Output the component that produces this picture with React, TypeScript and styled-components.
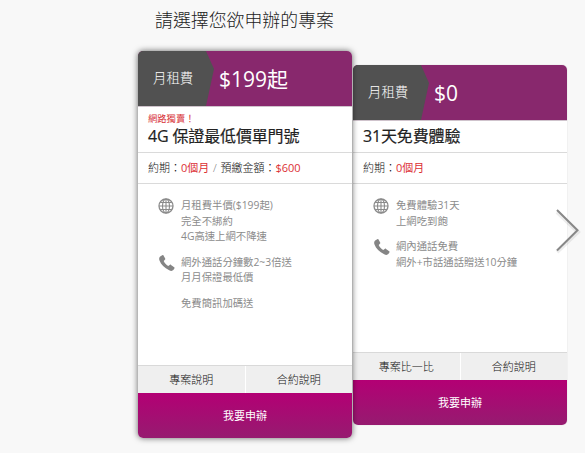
import React from "react";
import styled, { createGlobalStyle } from "styled-components";

const GlobalStyle = createGlobalStyle`
  body {
    margin: 0;
    background: #f8f8f8;
    font-family: "Open Sans", "Noto Sans CJK TC", sans-serif;
    overflow: hidden;
  }
  * { box-sizing: border-box; }
`;

const Page = styled.main`
  position: relative;
  width: 585px;
  height: 453px;
  overflow: hidden;
  background: #f8f8f8;
`;

const Heading = styled.h1`
  margin: 0;
  padding: 7px 0 0 155px;
  height: 51px;
  font-size: 17.9px;
  line-height: 26px;
  font-weight: 300;
  color: #222;
  white-space: nowrap;
`;

const Cards = styled.div`
  display: flex;
  align-items: flex-start;
  gap: 1px;
  padding-left: 138px;
`;

const Card = styled.article<{ $active?: boolean }>`
  position: relative;
  z-index: ${(p) => (p.$active ? 1 : 0)};
  display: flex;
  flex-direction: column;
  width: 214px;
  height: ${(p) => (p.$active ? 387 : 359.5)}px;
  margin-top: ${(p) => (p.$active ? 0 : 14)}px;
  border-radius: 5px;
  background: #fff;
  box-shadow: ${(p) => (p.$active ? "0 0 6px rgba(0, 0, 0, 0.6)" : "0 0 1px rgba(0, 0, 0, 0.3)")};
`;

const PriceBar = styled.header`
  display: flex;
  flex: none;
  height: 56px;
  border-radius: 5px 5px 0 0;
  overflow: hidden;
  background: #88286d;
  border-bottom: 1px solid #cfc3cc;
  color: #fff;
`;

const PriceLabel = styled.span`
  width: 76px;
  padding-left: 15px;
  background: #515151;
  clip-path: polygon(0 0, 68px 0, 76px 18px, 68px 100%, 0 100%);
  font-size: 13.4px;
  font-weight: 300;
  line-height: 55px;
  white-space: nowrap;
`;

const Price = styled.strong`
  padding: 1px 0 0 5px;
  font-size: 21px;
  line-height: 55px;
  font-weight: 400;
`;

const TitleBlock = styled.div<{ $active?: boolean }>`
  flex: none;
  height: ${(p) => (p.$active ? 46 : 32)}px;
  padding: ${(p) => (p.$active ? 5 : 3)}px 10px 0;
  border-bottom: 1px solid #dadada;
  white-space: nowrap;
`;

const Tag = styled.div`
  height: 12px;
  font-size: 9.3px;
  line-height: 13px;
  color: #d8343a;
`;

const Title = styled.h2`
  margin: 0;
  font-size: 16px;
  line-height: 24px;
  font-weight: 400;
  letter-spacing: -0.15px;
  color: #222;
  -webkit-text-stroke: 0.2px #222;
`;

const Terms = styled.div`
  flex: none;
  height: 31px;
  padding-left: 10px;
  border-bottom: 1px solid #dadada;
  font-size: 11px;
  line-height: 30px;
  font-weight: 300;
  color: #111;
  white-space: nowrap;
`;

const Red = styled.span`
  color: #dc3034;
  font-weight: 400;
`;

const Slash = styled.span`
  color: #777;
  margin: 0 3.7px;
`;

const Features = styled.ul`
  flex: 1;
  display: flex;
  flex-direction: column;
  gap: 10px;
  margin: 0;
  padding: 14px 0 0 20px;
  list-style: none;
`;

const Feature = styled.li`
  display: grid;
  grid-template-columns: 23px 1fr;
  font-size: 10.35px;
  line-height: 15.5px;
  color: #8b8b8b;
  white-space: nowrap;
`;

const Line = styled.div``;

const Links = styled.div`
  display: flex;
  flex: none;
  height: 28px;
  border-top: 1px solid #d9d9d9;
`;

const LinkButton = styled.button`
  flex: 1;
  padding: 0;
  border: 0;
  background: #efefef;
  font-family: inherit;
  font-size: 11px;
  font-weight: 300;
  line-height: 27px;
  color: #111;

  &:first-child {
    border-right: 1px solid #fff;
  }
`;

const Apply = styled.button`
  flex: none;
  height: 45px;
  padding: 0 0 1px;
  border: 0;
  border-radius: 0 0 5px 5px;
  background: linear-gradient(#b30074, #961b70);
  font-family: inherit;
  font-size: 11px;
  font-weight: 400;
  color: #fff;
`;

const NextButton = styled.button`
  position: absolute;
  z-index: 2;
  left: 551px;
  top: 205px;
  width: 32px;
  height: 52px;
  padding: 0;
  border: 0;
  background: none;
`;

const IconCell = styled.div`
  svg {
    display: block;
  }
`;

const Globe = () => (
  <svg width="16" height="16" viewBox="0 0 16 16" fill="none" stroke="#8b8b8b" strokeWidth="1.1">
    <circle cx="8" cy="8" r="7" strokeWidth="1.3" />
    <ellipse cx="8" cy="8" rx="3.5" ry="7" />
    <path d="M8 1v14M1 8h14M2.200 4.500h11.600M2.200 11.500h11.600" />
  </svg>
);

const Phone = () => (
  <svg width="17" height="17" viewBox="0 0 17 17" fill="#858585">
    <path d="M2.500 1.200 4.300.2c.5-.2.9-.1 1.200.4l1.700 3c.3.5.1.9-.3 1.200L5.700 5.900c.8 1.900 2.500 3.700 4.500 5l1.500-1c.5-.4.9-.4 1.300 0l3.200 2.300c.5.400.5.8.2 1.300l-1.100 1.600c-.8 1-2.500 1-4.100.2C6.400 12.900 3 9.600 1.500 5.500.800 3.500 1.200 2 2.500 1.200Z" />
  </svg>
);

type Plan = {
  price: string;
  tag?: string;
  title: string;
  deposit?: string;
  features: { icon?: React.ReactNode; lines: string[] }[];
  link: string;
};

const plans: Plan[] = [
  {
    price: "$199起",
    tag: "網路獨賣！",
    title: "4G 保證最低價單門號",
    deposit: "$600",
    features: [
      { icon: <Globe />, lines: ["月租費半價($199起)", "完全不綁約", "4G高速上網不降速"] },
      { icon: <Phone />, lines: ["網外通話分鐘數2~3倍送", "月月保證最低價"] },
      { lines: ["免費簡訊加碼送"] },
    ],
    link: "專案說明",
  },
  {
    price: "$0",
    title: "31天免費體驗",
    features: [
      { icon: <Globe />, lines: ["免費體驗31天", "上網吃到飽"] },
      { icon: <Phone />, lines: ["網內通話免費", "網外+市話通話贈送10分鐘"] },
    ],
    link: "專案比一比",
  },
];

const PlanCard = ({ plan }: { plan: Plan }) => {
  const active = Boolean(plan.tag);
  return (
    <Card $active={active}>
      <PriceBar>
        <PriceLabel>月租費</PriceLabel>
        <Price>{plan.price}</Price>
      </PriceBar>
      <TitleBlock $active={active}>
        {plan.tag && <Tag>{plan.tag}</Tag>}
        <Title>{plan.title}</Title>
      </TitleBlock>
      <Terms>
        約期：<Red>0個月</Red>
        {plan.deposit && (
          <>
            <Slash>/</Slash>預繳金額：<Red>{plan.deposit}</Red>
          </>
        )}
      </Terms>
      <Features>
        {plan.features.map((f) => (
          <Feature key={f.lines[0]}>
            <IconCell>{f.icon}</IconCell>
            <div>
              {f.lines.map((l) => (
                <Line key={l}>{l}</Line>
              ))}
            </div>
          </Feature>
        ))}
      </Features>
      <Links>
        <LinkButton>{plan.link}</LinkButton>
        <LinkButton>合約說明</LinkButton>
      </Links>
      <Apply>我要申辦</Apply>
    </Card>
  );
};

export default function App() {
  return (
    <Page>
      <GlobalStyle />
      <Heading>請選擇您欲申辦的專案</Heading>
      <Cards>
        {plans.map((p) => (
          <PlanCard key={p.title} plan={p} />
        ))}
      </Cards>
      <NextButton aria-label="Next">
        <svg width="32" height="52" viewBox="0 0 32 52" fill="none">
          <path d="M6 7 27 27 6 47" stroke="#000" strokeOpacity=".07" strokeWidth="4" />
          <path d="M6 5 26.500 25.300 6 45.500" stroke="#888" strokeWidth="2" />
        </svg>
      </NextButton>
    </Page>
  );
}
